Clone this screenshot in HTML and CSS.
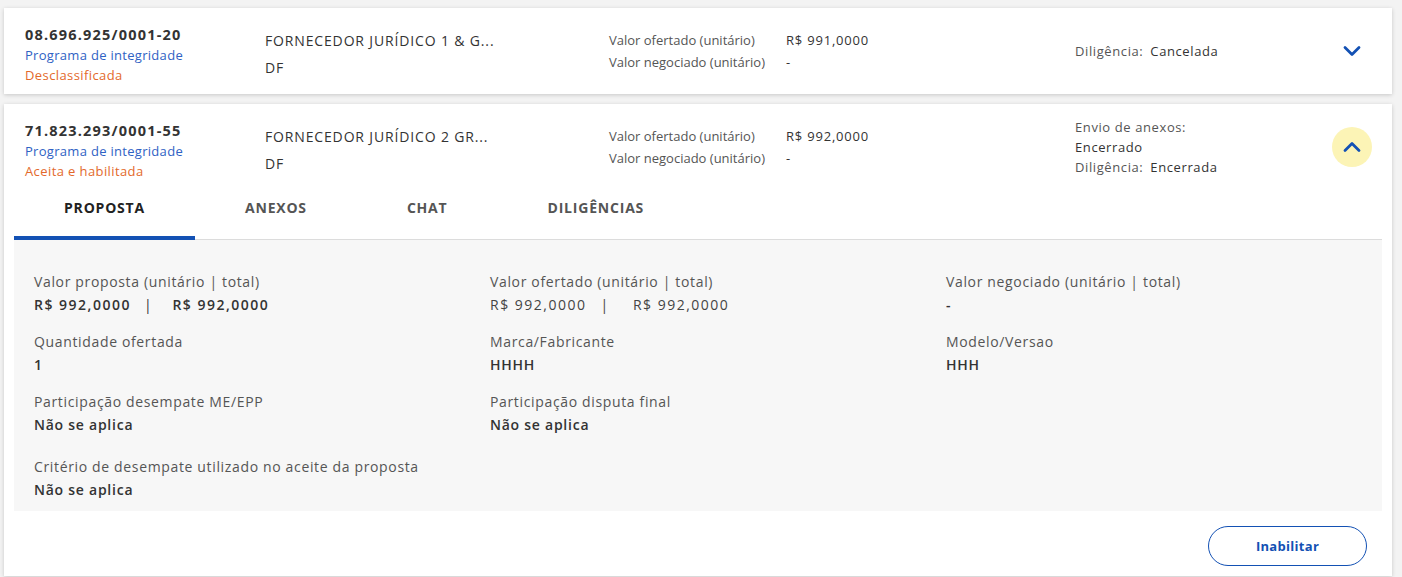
FILE: index.html
```html
<!DOCTYPE html>
<html lang="pt-BR">
<head>
<meta charset="utf-8">
<title>Fornecedores</title>
<link rel="stylesheet" href="styles.css">
</head>
<body>
<div class="list">
  <section class="card">
    <div class="head">
      <div class="id">
        <div class="cnpj">08.696.925/0001-20</div>
        <div class="link">Programa de integridade</div>
        <div class="state">Desclassificada</div>
      </div>
      <div class="name">
        <div>FORNECEDOR JURÍDICO 1 &amp; G...</div>
        <div>DF</div>
      </div>
      <div class="vals">
        <div class="vrow"><span class="vl">Valor ofertado (unitário)</span><span class="vv">R$ 991,0000</span></div>
        <div class="vrow"><span class="vl">Valor negociado (unitário)</span><span class="vv">-</span></div>
      </div>
      <div class="status">
        <div><span class="sl">Diligência:</span><span class="sv">Cancelada</span></div>
      </div>
      <div class="toggle">
        <span class="chev"><svg width="18" height="12" viewBox="0 0 18 12"><path d="M2 2.5 L9 9.5 L16 2.5" fill="none" stroke="#1351b4" stroke-width="2.8" stroke-linecap="round" stroke-linejoin="round"/></svg></span>
      </div>
    </div>
  </section>

  <section class="card">
    <div class="head">
      <div class="id">
        <div class="cnpj">71.823.293/0001-55</div>
        <div class="link">Programa de integridade</div>
        <div class="state">Aceita e habilitada</div>
      </div>
      <div class="name">
        <div>FORNECEDOR JURÍDICO 2 GR...</div>
        <div>DF</div>
      </div>
      <div class="vals">
        <div class="vrow"><span class="vl">Valor ofertado (unitário)</span><span class="vv">R$ 992,0000</span></div>
        <div class="vrow"><span class="vl">Valor negociado (unitário)</span><span class="vv">-</span></div>
      </div>
      <div class="status">
        <div class="sl">Envio de anexos:</div>
        <div class="sv solo">Encerrado</div>
        <div><span class="sl">Diligência:</span><span class="sv">Encerrada</span></div>
      </div>
      <div class="toggle">
        <span class="chev open"><svg width="18" height="12" viewBox="0 0 18 12"><path d="M2 9.5 L9 2.5 L16 9.5" fill="none" stroke="#1351b4" stroke-width="2.8" stroke-linecap="round" stroke-linejoin="round"/></svg></span>
      </div>
    </div>

    <nav class="tabs">
      <span class="tab active">PROPOSTA</span>
      <span class="tab">ANEXOS</span>
      <span class="tab">CHAT</span>
      <span class="tab">DILIGÊNCIAS</span>
    </nav>

    <div class="panel">
      <div class="field">
        <div class="fl">Valor proposta (unitário | total)</div>
        <div class="fv"><span class="num">R$ 992,0000</span><span class="sep sep1">|</span><span class="num">R$ 992,0000</span></div>
      </div>
      <div class="field">
        <div class="fl">Valor ofertado (unitário | total)</div>
        <div class="fv light"><span class="num">R$ 992,0000</span><span class="sep sep2">|</span><span class="num">R$ 992,0000</span></div>
      </div>
      <div class="field">
        <div class="fl">Valor negociado (unitário | total)</div>
        <div class="fv">-</div>
      </div>
      <div class="field">
        <div class="fl">Quantidade ofertada</div>
        <div class="fv">1</div>
      </div>
      <div class="field">
        <div class="fl">Marca/Fabricante</div>
        <div class="fv">HHHH</div>
      </div>
      <div class="field">
        <div class="fl">Modelo/Versao</div>
        <div class="fv">HHH</div>
      </div>
      <div class="field">
        <div class="fl">Participação desempate ME/EPP</div>
        <div class="fv">Não se aplica</div>
      </div>
      <div class="field">
        <div class="fl">Participação disputa final</div>
        <div class="fv">Não se aplica</div>
      </div>
      <div class="field"></div>
      <div class="field wide">
        <div class="fl">Critério de desempate utilizado no aceite da proposta</div>
        <div class="fv">Não se aplica</div>
      </div>
    </div>

    <div class="actions">
      <button class="btn">Inabilitar</button>
    </div>
  </section>
</div>
</body>
</html>
```

FILE: styles.css
```css
* { box-sizing: border-box; }
html, body { margin: 0; padding: 0; }
body {
  background: #f3f3f3;
  font-family: "Open Sans", "Liberation Sans", sans-serif;
  color: #333;
  width: 1402px;
  height: 577px;
  overflow: hidden;
}
.list {
  padding: 8px 10px 0 4px;
  display: flex;
  flex-direction: column;
  gap: 10px;
}
.card {
  background: #fff;
  box-shadow: 0 1px 4px rgba(0,0,0,0.18);
}
.head {
  height: 86px;
  display: grid;
  grid-template-columns: 240px 344px 466px 1fr 80px;
  padding-left: 21px;
}
.id { padding-top: 17px; font-size: 13px; line-height: 20px; }
.cnpj { font-size: 14.5px; font-weight: 700; color: #333; letter-spacing: 1.2px; }
.link { color: #2f62c4; letter-spacing: 0.3px; }
.state { color: #e3692b; letter-spacing: 0.4px; }
.name { padding-top: 19px; font-size: 14px; line-height: 27px; color: #333; letter-spacing: 0.85px; }
.vals { padding-top: 21px; font-size: 13px; line-height: 22px; }
.vrow { display: flex; }
.vl { width: 177px; color: #555; }
.vv { color: #333; letter-spacing: 0.8px; }
.status { align-self: center; font-size: 13px; line-height: 20px; letter-spacing: 0.6px; }
.sl { color: #555; }
.sv { color: #333; margin-left: 7px; }
.sv.solo { margin-left: 0; }
.toggle { display: flex; align-items: center; justify-content: center; }
.chev {
  width: 40px; height: 40px; border-radius: 50%;
  display: flex; align-items: center; justify-content: center;
}
.chev.open { background: #fcf4b6; }
.tabs {
  margin: 0 10px;
  display: flex;
  border-bottom: 1px solid #dcdcdc;
}
.tab {
  padding: 9px 50px 0;
  height: 50px;
  font-size: 14px;
  line-height: 18px;
  font-weight: 700;
  color: #555;
  letter-spacing: 0.8px;
  border-bottom: 4px solid transparent;
  margin-bottom: -1px;
}
.tab.active { color: #222; border-bottom-color: #1351b4; }
.panel {
  margin: 0 10px;
  background: #f7f7f7;
  padding: 31px 20px 9px;
  display: grid;
  grid-template-columns: 456px 456px 1fr;
  row-gap: 14px;
}
.field { min-height: 46px; }
.field.wide { grid-column: 1 / -1; margin-top: 5px; grid-row: 4; }
.fl { font-size: 14px; line-height: 22px; color: #555; letter-spacing: 0.65px; }
.fv { font-size: 14px; line-height: 24px; font-weight: 600; color: #333; letter-spacing: 0.75px; display: flex; }
.fv.light { font-weight: 400; color: #444; }
.num { letter-spacing: 1.5px; }
.sep { font-weight: 400; }
.sep1 { margin: 0 20px 0 13px; }
.sep2 { margin: 0 24px 0 14px; }
.actions {
  display: flex;
  justify-content: flex-end;
  padding: 15px 25px 10px 0;
}
.btn {
  width: 159px;
  height: 40px;
  border: 1px solid #1351b4;
  border-radius: 20px;
  background: #fff;
  color: #1351b4;
  font-family: inherit;
  font-size: 13px;
  font-weight: 700;
  letter-spacing: 0.3px;
}
```
